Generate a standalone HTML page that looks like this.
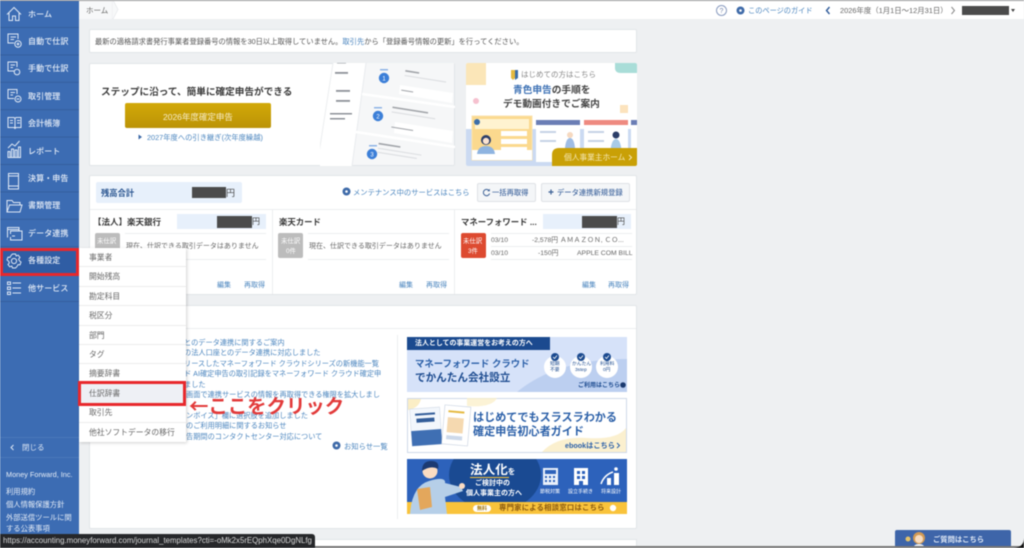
<!DOCTYPE html>
<html lang="ja"><head><meta charset="utf-8"><title>ホーム</title>
<style>
*{box-sizing:border-box}
html,body{margin:0;padding:0;width:1024px;height:548px;overflow:hidden;background:#eef0f2}
body{font-family:"Liberation Sans","Noto Sans CJK JP",sans-serif;position:relative}
#r{position:absolute;left:0;top:0;width:1024px;height:548px;overflow:hidden;filter:blur(.45px)}
#r div,#r svg,#r span.t{position:absolute}
.t{white-space:nowrap;height:12px;line-height:12px;font-size:7.5px;color:#555;margin-top:.7px}
.s{color:#e6edf7;font-size:8px;left:28px;font-weight:500;letter-spacing:.1px}
.l{color:#4c86bf}
.card{background:#fff;border:1px solid #e2e5e8;border-radius:2px}
.m{left:79px;width:107px;height:19.4px;background:#fff;border-bottom:1px solid #ececec;font-size:7.8px;color:#666;line-height:19.5px;padding-left:10px;white-space:nowrap}
.rd{background:#4b4b4b}
.hr{background:#eceef0;height:1px}
.bl{background:#e7f0fb}
.si{fill:none;stroke:#dfe8f5;stroke-width:1;left:0;top:0}
.b{font-weight:700;color:#333}
.nw{font-size:7.2px;color:#4c86bf}
</style></head><body><div id="r">

<!-- top bar -->
<div style="left:79px;top:0;width:945px;height:19px;background:#fff"></div>
<div style="left:79px;top:0;width:34px;height:19px;background:#f7f8f9"></div>
<svg style="left:112px;top:0" width="8" height="19"><path d="M0 0H1L6 9.5L1 19H0Z" fill="#f7f8f9" stroke="#e3e5e8" stroke-width=".6"/></svg>
<span class="t" style="left:86px;top:4px;color:#666">ホーム</span>
<svg style="left:715px;top:4px" width="13" height="13"><circle cx="6.5" cy="6.5" r="5" fill="none" stroke="#8a9cc0" stroke-width="1"/><text x="6.5" y="9" font-size="7" text-anchor="middle" fill="#7688ad" font-family="Liberation Sans">?</text></svg>
<svg style="left:736px;top:6px" width="9" height="9"><circle cx="4.5" cy="4.5" r="4" fill="#3e6aa8"/><circle cx="4.5" cy="4.5" r="1.3" fill="#fff"/></svg>
<span class="t" style="left:748px;top:4px;font-size:7.2px;color:#4c86bf">このページのガイド</span>
<svg style="left:825px;top:6px" width="6" height="9"><path d="M4.5 1L1.5 4.5L4.5 8" fill="none" stroke="#2f5b9a" stroke-width="1.4"/></svg>
<span class="t" style="left:840px;top:4px;font-size:7.4px;color:#666">2026年度（1月1日〜12月31日）</span>
<svg style="left:950px;top:6px" width="6" height="9"><path d="M1.5 1L4.5 4.5L1.5 8" fill="none" stroke="#888" stroke-width="1"/></svg>
<div class="rd" style="left:962px;top:6px;width:47px;height:9px"></div>
<svg style="left:1010px;top:8px" width="6" height="5"><path d="M1 1H5L3 4Z" fill="#444"/></svg>

<!-- notice -->
<div class="card" style="left:89px;top:29px;width:548px;height:24px"></div>
<span class="t" style="left:95px;top:35px;font-size:7.28px;color:#555">最新の適格請求書発行事業者登録番号の情報を30日以上取得していません。<span style="color:#4c86bf">取引先</span>から「登録番号情報の更新」を行ってください。</span>

<!-- hero -->
<div class="card" style="left:89px;top:63px;width:366px;height:103px"></div>
<span class="t b" style="left:101px;top:86px;font-size:9.65px;color:#3a3a3a">ステップに沿って、簡単に確定申告ができる</span>
<div style="left:125px;top:103px;width:146px;height:25px;border-radius:2px;background:linear-gradient(#d2a908,#bb9307)"></div>
<span class="t" style="left:163px;top:110px;font-size:8.5px;color:#f7ecc6">2026年度確定申告</span>
<svg style="left:138px;top:134px" width="5" height="6"><path d="M.5 .5L4 3L.5 5.5Z" fill="#3e6aa8"/></svg>
<span class="t l" style="left:147px;top:131px;font-size:7.3px">2027年度への引き継ぎ(次年度繰越)</span>
<svg style="left:320px;top:63px" width="135" height="103" viewBox="0 0 135 103">
<path d="M13 0L-3 103H32L46 0Z" fill="#fff"/>
<path d="M46 0H134V102H32Z" fill="#f6f7f8"/>
<path d="M13 0L-3 103" stroke="#eceef0" fill="none"/>
<path d="M46 0L32 103" stroke="#e9ebee" fill="none"/>
<path d="M42 31L135 44M36 69L135 84" stroke="#fff" stroke-width="2.5" fill="none"/>
<path d="M80 22L133 30L132 40L79 31Z" fill="#fff"/>
<path d="M75 59L133 68L132 80L74 70Z" fill="#fff"/>
<g fill="#8e9299"><rect x="15" y="9" width="13" height="1.8"/><rect x="16" y="27" width="14" height="1.8"/><rect x="16" y="37" width="14" height="1.8"/><rect x="10" y="50" width="22" height="1.5"/><rect x="10" y="55" width="15" height="1.5"/><rect x="17" y="-1" width="9" height="1.5"/></g>
<g fill="#a0a3a8" transform="rotate(9 85 10)"><rect x="85" y="7" width="14" height="1.6"/><rect x="78" y="45" width="36" height="1.6"/><rect x="70" y="83" width="22" height="1.6"/><rect x="84" y="27" width="12" height="1"/><rect x="80" y="65" width="22" height="1"/></g>
<g fill="#dcdee1" transform="rotate(9 85 10)"><rect x="85" y="12" width="42" height="1.1"/><rect x="78" y="50" width="44" height="1.1"/><rect x="70" y="88" width="44" height="1.1"/><rect x="70" y="92" width="40" height="1.1"/></g>
<circle cx="64" cy="15" r="5.2" fill="#3c7fd8"/><circle cx="58" cy="53" r="5.2" fill="#3c7fd8"/><circle cx="52" cy="91" r="5.2" fill="#3c7fd8"/>
<g fill="#8fb4e6"><rect x="60" y="6" width="8" height="1.5"/><rect x="54" y="44" width="8" height="1.5"/><rect x="49" y="82" width="8" height="1.5"/></g>
<text x="64" y="17.5" font-size="6" fill="#fff" text-anchor="middle" font-family="Liberation Sans">1</text>
<text x="58" y="55.5" font-size="6" fill="#fff" text-anchor="middle" font-family="Liberation Sans">2</text>
<text x="52" y="93.5" font-size="6" fill="#fff" text-anchor="middle" font-family="Liberation Sans">3</text>
</svg>

<!-- right promo -->
<svg style="left:466px;top:63px;border-radius:2px" width="171" height="103" viewBox="0 0 171 103">
<rect width="171" height="103" fill="#fff"/>
<path d="M0 0H20V22H0Z" fill="#fbe6b8"/>
<path d="M149 0H171V10H155Q149 10 149 5Z" fill="#a9ddd8"/>
<circle cx="10" cy="38" r="3" fill="#f6c1cf"/>
<rect x="154" y="42" width="8" height="8" fill="#fce3bd"/>
<path d="M45 7H49V15L47 17L45 15Z" fill="#e5b93f"/><path d="M49 7H52V15L49 17Z" fill="#3d6ea8"/>
<rect y="66" width="171" height="37" fill="#cbdaf2"/>
<rect x="6" y="53" width="60" height="44" fill="#fbd98e" stroke="#fbe3ae"/>
<rect x="6" y="87" width="60" height="10" fill="#fff"/>
<rect x="9" y="56" width="54" height="10" fill="#fff3d0"/>
<circle cx="11" cy="59" r="3" fill="#3d6ea8"/>
<g fill="#fff"><rect x="35" y="68" width="26" height="5"/><rect x="35" y="76" width="26" height="5"/><rect x="35" y="84" width="26" height="3"/></g>
<circle cx="20" cy="77" r="5" fill="#2c3e68"/><path d="M11 91Q12 83 20 83T29 91Z" fill="#8fb4e0"/>
<circle cx="20" cy="78" r="3.2" fill="#fbe3d0"/>
<rect x="70" y="57" width="44" height="42" fill="#fff"/><rect x="70" y="57" width="44" height="5" fill="#6b7eb5"/>
<rect x="118" y="57" width="44" height="42" fill="#fff"/><rect x="118" y="57" width="44" height="5" fill="#ee8a80"/>
<rect x="165" y="57" width="6" height="42" fill="#fff"/><rect x="165" y="57" width="6" height="5" fill="#6b7eb5"/>
<circle cx="104" cy="72" r="3" fill="#f6d9c0"/><path d="M99 85Q100 75 104 75T109 85Z" fill="#9fbde5"/><rect x="103" y="85" width="6" height="10" fill="#2c3e68"/>
<circle cx="150" cy="72" r="3.5" fill="#2c3e68"/><path d="M144 92Q145 76 150 76T156 92Z" fill="#a8cbe8"/>
<g fill="#c6d2e6"><rect x="74" y="68" width="16" height="2"/><rect x="74" y="77" width="16" height="2"/><rect x="122" y="68" width="16" height="2"/><rect x="122" y="77" width="16" height="2"/></g>
<path d="M86 103V92Q86 85 93 85H171V103Z" fill="#c9a006"/>
</svg>
<span class="t" style="left:521px;top:68px;font-size:7.5px;color:#888">はじめての方はこちら</span>
<span class="t" style="left:513px;top:84px;font-size:9.7px;font-weight:700;color:#444"><span style="color:#3e72b5">青色申告</span>の手順を</span>
<span class="t" style="left:503px;top:98px;font-size:9.7px;font-weight:700;color:#444">デモ動画付きでご案内</span>
<span class="t" style="left:564px;top:151px;font-size:7.7px;color:#f5e7b5">個人事業主ホーム</span>
<svg style="left:628px;top:154px" width="5" height="7"><path d="M1 1L3.5 3.5L1 6" fill="none" stroke="#f5e7b5"/></svg>

<!-- balance card -->
<div class="card" style="left:89px;top:175px;width:548px;height:120px"></div>
<div class="bl" style="left:96px;top:182px;width:146px;height:21px;border-radius:2px"></div>
<span class="t" style="left:101px;top:186px;font-size:8.3px;font-weight:700;color:#2a5590">残高合計</span>
<div class="rd" style="left:192px;top:187px;width:34px;height:11px"></div>
<span class="t" style="left:226px;top:186px;font-size:9px;color:#444">円</span>
<svg style="left:342px;top:187px" width="9" height="9"><circle cx="4.5" cy="4.5" r="4" fill="#3e6aa8"/><circle cx="4.5" cy="4.5" r="1.3" fill="#fff"/></svg>
<span class="t l" style="left:353px;top:186px;font-size:7.3px">メンテナンス中のサービスはこちら</span>
<div style="left:477px;top:183px;width:59px;height:19px;background:#f4f6f8;border:1px solid #dfe2e6;border-radius:2px"></div>
<svg style="left:482px;top:188px" width="9" height="9"><path d="M7 2.5A3.2 3.2 0 1 0 7.6 5.5" fill="none" stroke="#3a5f95" stroke-width="1"/><path d="M7.8 .8V3.3H5.3" fill="#3a5f95"/></svg>
<span class="t" style="left:492px;top:186px;font-size:7.3px;color:#4a6ea3;font-weight:500">一括再取得</span>
<div style="left:541px;top:183px;width:89px;height:19px;background:#f4f6f8;border:1px solid #dfe2e6;border-radius:2px"></div>
<svg style="left:548px;top:189px" width="6" height="6"><path d="M3 .5V5.5M.5 3H5.5" stroke="#3a5f95" stroke-width="1.2"/></svg>
<span class="t" style="left:557px;top:186px;font-size:7.3px;color:#4a6ea3;font-weight:500">データ連携新規登録</span>
<div class="hr" style="left:90px;top:209px;width:546px"></div>
<div style="left:272px;top:210px;width:1px;height:84px;background:#eceef0"></div>
<div style="left:454px;top:210px;width:1px;height:84px;background:#eceef0"></div>

<span class="t b" style="left:93px;top:215px;font-size:8.5px;color:#3a3a3a">【法人】楽天銀行</span>
<div class="bl" style="left:177px;top:214px;width:89px;height:15px"></div>
<div class="rd" style="left:217px;top:216px;width:35px;height:12px"></div>
<span class="t" style="left:252px;top:215px;font-size:8px;color:#444">円</span>
<div class="hr" style="left:125px;top:233px;width:141px"></div><div class="hr" style="left:125px;top:259px;width:141px"></div>
<div style="left:95px;top:233px;width:25px;height:25px;background:#bcbcbc;border-radius:2px"></div>
<span class="t" style="left:97px;top:235px;font-size:6.4px;color:#fff">未仕訳</span>
<span class="t" style="left:126px;top:240px;font-size:7px;color:#666">現在、仕訳できる取引データはありません</span>
<span class="t l" style="left:217px;top:279px;font-size:7px">編集</span>
<span class="t l" style="left:244px;top:279px;font-size:7px">再取得</span>

<span class="t b" style="left:279px;top:215px;font-size:8.4px;color:#3a3a3a">楽天カード</span>
<div class="hr" style="left:308px;top:233px;width:141px"></div><div class="hr" style="left:308px;top:259px;width:141px"></div>
<div style="left:278px;top:233px;width:25px;height:25px;background:#bcbcbc;border-radius:2px"></div>
<span class="t" style="left:281px;top:235px;font-size:6.4px;color:#fff">未仕訳</span>
<span class="t" style="left:286px;top:245px;font-size:6.4px;color:#fff">0件</span>
<span class="t" style="left:309px;top:240px;font-size:7px;color:#666">現在、仕訳できる取引データはありません</span>
<span class="t l" style="left:399px;top:279px;font-size:7px">編集</span>
<span class="t l" style="left:426px;top:279px;font-size:7px">再取得</span>

<span class="t b" style="left:461px;top:215px;font-size:8.4px;color:#3a3a3a">マネーフォワード ...</span>
<div class="bl" style="left:543px;top:214px;width:88px;height:15px"></div>
<div class="rd" style="left:582px;top:216px;width:35px;height:12px"></div>
<span class="t" style="left:617px;top:215px;font-size:8px;color:#444">円</span>
<div style="left:461px;top:233px;width:25px;height:25px;background:#dd4a30;border-radius:2px"></div>
<span class="t" style="left:463px;top:235px;font-size:6.4px;color:#fff">未仕訳</span>
<span class="t" style="left:468px;top:245px;font-size:6.4px;color:#fff">3件</span>
<div class="hr" style="left:491px;top:233px;width:141px"></div><div class="hr" style="left:491px;top:246px;width:141px"></div><div class="hr" style="left:491px;top:259px;width:141px"></div>
<span class="t" style="left:491px;top:234px;font-size:6.8px;color:#666">03/10</span>
<span class="t" style="left:532px;top:234px;font-size:6.8px;color:#666">-2,578円</span>
<span class="t" style="left:560px;top:234px;font-size:6.8px;color:#666">ＡＭＡＺＯＮ, ＣＯ...</span>
<span class="t" style="left:491px;top:247px;font-size:6.8px;color:#666">03/10</span>
<span class="t" style="left:538px;top:247px;font-size:6.8px;color:#666">-150円</span>
<span class="t" style="left:577px;top:247px;font-size:6.8px;color:#666">APPLE COM BILL</span>
<span class="t l" style="left:582px;top:279px;font-size:7px">編集</span>
<span class="t l" style="left:608px;top:279px;font-size:7px">再取得</span>

<!-- news card -->
<div class="card" style="left:89px;top:305px;width:548px;height:224px"></div>
<div class="hr" style="left:90px;top:328px;width:546px"></div>
<div style="left:397px;top:335px;width:1px;height:184px;background:#eceef0"></div>
<span class="t nw" style="left:184px;top:336px">とのデータ連携に関するご案内</span>
<span class="t nw" style="left:184px;top:346px">の法人口座とのデータ連携に対応しました</span>
<span class="t nw" style="left:184px;top:357px">リースしたマネーフォワード クラウドシリーズの新機能一覧</span>
<span class="t nw" style="left:184px;top:367px">ド AI確定申告の取引記録をマネーフォワード クラウド確定申</span>
<span class="t nw" style="left:184px;top:378px">ました</span>
<span class="t nw" style="left:186px;top:388px">画面で連携サービスの情報を再取得できる権限を拡大しまし</span>
<span class="t nw" style="left:186px;top:409px">ンボイス」欄に選択肢を追加しました</span>
<span class="t nw" style="left:186px;top:419px">のご利用明細に関するお知らせ</span>
<span class="t nw" style="left:186px;top:430px">告期間のコンタクトセンター対応について</span>
<svg style="left:332px;top:441px" width="9" height="9"><circle cx="4.5" cy="4.5" r="4" fill="#3e6aa8"/><circle cx="4.5" cy="4.5" r="1.3" fill="#fff"/></svg>
<span class="t l" style="left:344px;top:440px;font-size:7.3px">お知らせ一覧</span>

<!-- banners -->
<svg style="left:407px;top:337px" width="220" height="55" viewBox="0 0 220 55">
<rect width="220" height="55" fill="#d6e2f9"/>
<path d="M110 55Q150 22 220 22V55Z" fill="#bccff0"/>
<rect width="143" height="13" fill="#1b4a8f"/>
<circle cx="148" cy="30" r="11" fill="#fff"/><circle cx="174" cy="30" r="11" fill="#fff"/><circle cx="200" cy="30" r="11" fill="#fff"/>
<circle cx="148" cy="20" r="4" fill="#1b4a8f"/><circle cx="174" cy="20" r="4" fill="#1b4a8f"/><circle cx="200" cy="20" r="4" fill="#1b4a8f"/>
<path d="M146 20L147.5 21.5L150 18.5M172 20L173.5 21.5L176 18.5M198 20L199.5 21.5L202 18.5" fill="none" stroke="#fff" stroke-width=".8"/>
<circle cx="216" cy="48" r="2.8" fill="#1b3a70"/>
</svg>
<span class="t" style="left:415px;top:337px;font-size:6.95px;font-weight:700;color:#fff">法人としての事業運営をお考えの方へ</span>
<span class="t" style="left:415px;top:357px;font-size:9.4px;font-weight:700;color:#2a5fa8">マネーフォワード クラウド</span>
<span class="t" style="left:415px;top:371px;font-size:10.6px;font-weight:700;color:#1b4a8f">でかんたん会社設立</span>
<span class="t" style="left:550px;top:358px;font-size:4.8px;color:#1b4a8f">短期</span>
<span class="t" style="left:550px;top:364px;font-size:4.8px;color:#1b4a8f">不要</span>
<span class="t" style="left:572px;top:358px;font-size:4.8px;color:#1b4a8f">かんたん</span>
<span class="t" style="left:575px;top:364px;font-size:4.8px;color:#1b4a8f">3step</span>
<span class="t" style="left:600px;top:358px;font-size:4.8px;color:#1b4a8f">利用料</span>
<span class="t" style="left:603px;top:364px;font-size:4.8px;color:#1b4a8f">0円</span>
<span class="t" style="left:578px;top:379px;font-size:6px;font-weight:700;color:#1b4a8f">ご利用はこちら</span>

<svg style="left:407px;top:398px" width="220" height="55" viewBox="0 0 220 55">
<rect x=".5" y=".5" width="219" height="54" fill="#fff" stroke="#cfd9e8"/>
<path d="M1 1H14Q12 10 1 12Z" fill="#fbeec5"/>
<path d="M135 54Q150 38 180 40T219 30V54Z" fill="#fbf0cf"/>
<path d="M60 0H90Q85 10 60 8Z" fill="#fbeec5" opacity=".7"/>
<g transform="rotate(-4 20 30)"><rect x="4" y="10" width="30" height="37" fill="#f3f7fc" stroke="#cdd6e4" stroke-width=".5"/><rect x="4" y="32" width="30" height="15" fill="#3f6fb3"/><rect x="9" y="15" width="20" height="2" fill="#335d99"/><rect x="10" y="20" width="18" height="4" fill="#335d99"/></g>
<g transform="rotate(5 50 30)"><rect x="36" y="8" width="26" height="39" fill="#fff" stroke="#bcc8da" stroke-width=".5"/><rect x="40" y="13" width="16" height="2" fill="#e5b93f"/><rect x="40" y="20" width="16" height="15" fill="#f5d9b0"/><rect x="40" y="38" width="16" height="4" fill="#cdd9ea"/></g>
</svg>
<span class="t" style="left:473px;top:411px;font-size:11.1px;font-weight:700;color:#2a5fa8">はじめてでもスラスラわかる</span>
<span class="t" style="left:473px;top:425px;font-size:11.1px;font-weight:700;color:#2a5fa8">確定申告初心者ガイド</span>
<span class="t" style="left:565px;top:439px;font-size:7.2px;font-weight:700;color:#2a5fa8">ebookはこちら</span>
<svg style="left:616px;top:442px" width="5" height="7"><path d="M1 1L3.5 3.5L1 6" fill="none" stroke="#2a5fa8"/></svg>

<svg style="left:407px;top:459px" width="220" height="55" viewBox="0 0 220 55">
<rect width="220" height="55" fill="#2d62bb"/>
<ellipse cx="88" cy="16" rx="46" ry="36" fill="#1a4a92"/>
<rect y="43" width="220" height="12" fill="#f9c33b"/>
<path d="M3 55Q5 27 22 22T38 24L54 28L56 32L38 38L40 55Z" fill="#b6cfe8"/>
<circle cx="23" cy="12" r="7.5" fill="#fbdcc2"/><path d="M15 12Q15 2 24 2T31 10Q24 6 15 12Z" fill="#1c3a72"/>
<path d="M10 30L23 28L25 48L13 51Z" fill="#e3a75c"/>
<circle cx="55" cy="27" r="3" fill="#fbdcc2"/>
<rect x="136" y="9" width="15" height="17" fill="#e9f0fa"/>
<rect x="138" y="11" width="11" height="4" fill="#2d62bb"/>
<g fill="#2d62bb"><rect x="138" y="17" width="2" height="2"/><rect x="142" y="17" width="2" height="2"/><rect x="146" y="17" width="2" height="2"/><rect x="138" y="21" width="2" height="2"/><rect x="142" y="21" width="2" height="2"/><rect x="146" y="21" width="2" height="2"/></g>
<rect x="167" y="9" width="14" height="17" fill="#fff"/>
<g fill="#2d62bb"><rect x="170" y="12" width="3" height="3"/><rect x="175" y="12" width="3" height="3"/><rect x="170" y="17" width="3" height="3"/><rect x="175" y="17" width="3" height="3"/><rect x="172" y="22" width="4" height="4"/></g>
<path d="M194 25Q197 16 206 13" fill="none" stroke="#fff" stroke-width="1.5"/>
<rect x="200" y="19" width="4" height="7" fill="#fff"/><rect x="207" y="14" width="5" height="12" fill="#fff"/><circle cx="209" cy="10" r="1.8" fill="#fff"/>
<rect x="66" y="46" width="18" height="7" rx="3.5" fill="#fff"/>
<circle cx="206" cy="49" r="3.2" fill="#fff"/>
</svg>
<span class="t" style="left:470px;top:463px;font-size:12.6px;font-weight:700;color:#fff">法人化<span style="font-size:7.5px">を</span></span>
<div style="left:470px;top:477px;width:39px;height:1px;background:#f9c33b"></div>
<span class="t" style="left:475px;top:477px;font-size:7px;font-weight:700;color:#fff">ご検討中の</span>
<span class="t" style="left:466px;top:487px;font-size:7px;font-weight:700;color:#fff">個人事業主の方へ</span>
<span class="t" style="left:540px;top:485px;font-size:5px;color:#fff">節税対策</span>
<span class="t" style="left:568px;top:485px;font-size:5px;color:#fff">設立手続き</span>
<span class="t" style="left:601px;top:485px;font-size:5px;color:#fff">将来設計</span>
<span class="t" style="left:477px;top:502px;font-size:5px;font-weight:700;color:#a87a10">無料</span>
<span class="t" style="left:499px;top:501.5px;font-size:7.3px;font-weight:700;color:#8a5a10;letter-spacing:.27px">専門家による相談窓口はこちら</span>

<div style="left:89px;top:539px;width:548px;height:9px;background:#fff;border:1px solid #e2e5e8"></div>

<!-- sidebar -->
<div style="left:0;top:0;width:79px;height:548px;background:#3c6cb3"></div>
<div style="left:0;top:0;width:1024px;height:1px;background:#9a9a9a"></div>
<div class="hr" style="left:0;top:27px;width:79px;background:#355f9f;box-shadow:0 27.4px #355f9f,0 54.8px #355f9f,0 82.2px #355f9f,0 109.6px #355f9f,0 137px #355f9f,0 164.4px #355f9f,0 191.8px #355f9f,0 219.2px #355f9f,0 246.6px #355f9f,0 274px #355f9f"></div>
<div style="left:0;top:248px;width:79px;height:28px;background:#2f5da4;border:3px solid #e8282c"></div>
<span class="t s" style="top:8px">ホーム</span>
<span class="t s" style="top:35px">自動で仕訳</span>
<span class="t s" style="top:62px">手動で仕訳</span>
<span class="t s" style="top:90px">取引管理</span>
<span class="t s" style="top:117px">会計帳簿</span>
<span class="t s" style="top:145px">レポート</span>
<span class="t s" style="top:172px">決算・申告</span>
<span class="t s" style="top:199px">書類管理</span>
<span class="t s" style="top:227px">データ連携</span>
<span class="t s" style="top:254px">各種設定</span>
<span class="t s" style="top:282px">他サービス</span>
<svg class="si" width="24" height="300" viewBox="0 0 24 300">
<path d="M7 14.5L14 7.5L21 14.5M9 13V20.5H12.5V16H15.5V20.5H19V13"/>
<path d="M14 43H8V34H18V39M10.5 37H16M10.5 39.5H14"/><circle cx="18" cy="44" r="3.2"/><path d="M18 42.5V45.5M16.5 44H19.5"/>
<path d="M14 71H8V62H17V67M10.5 65H15M10.5 67.5H13"/><circle cx="17" cy="72" r="2.8"/>
<path d="M14 98.5H8V89.5H17V94M10.5 92.5H15M10.5 95H13"/><circle cx="18" cy="99" r="3"/><path d="M16.5 99H19.5"/>
<path d="M8 117.5V127.5H14L15 128.5L16 127.5H21V117.5H16L15 118.5L14 117.5ZM15 118.5V128M10 120.5H13M10 123H13M17 120.5H20M17 123H20"/>
<path d="M8 157V151.5H10V157M11.5 157V149H13.5V157M15 157V150H17V157M18.5 157V147H20.5V157M7.5 157.5H21M8 148L12 144L15 146L19.5 141"/>
<path d="M8.5 173.5H18.5V189H8.5ZM8.5 176H18.5M8.5 186H18.5"/>
<path d="M7 212V200.5H12L13.5 202.5H20V205M7 212L9.5 205H22L20 212Z"/>
<path d="M7.5 237.5V227.5H19V230.5M10.5 234V231H22V240H10.5V237"/><path d="M12 236H15M7.5 229.5H19"/>
<circle cx="14" cy="261" r="2.6"/><path d="M12.5 254L15.5 254L16.2 256L18.2 255.2L20 257.5L18.6 259.2L19.6 261L21 262L20 264.8L18 264.6L17 266.5L15.5 268H12.5L11.8 266L9.8 266.8L8 264.5L9.4 262.8L8.4 261L7 260L8 257.2L10 257.4L11 255.5Z"/>
<rect x="7.5" y="282" width="3" height="2.5"/><rect x="7.5" y="287" width="3" height="2.5"/><rect x="7.5" y="292" width="3" height="2.5"/><path d="M12.5 283H21M12.5 288H21M12.5 293H21"/>
</svg>
<div style="left:0;top:437px;width:79px;height:1px;background:#4a78ba"></div>
<div style="left:0;top:457px;width:79px;height:1px;background:#4a78ba"></div>
<svg style="left:10px;top:444px" width="5" height="7"><path d="M3.5 1L1 3.5L3.5 6" fill="none" stroke="#dfe8f5"/></svg>
<span class="t" style="left:22px;top:441px;font-size:7.5px;color:#dfe8f5">閉じる</span>
<span class="t" style="left:6px;top:468px;font-size:7.3px;color:#e6edf7">Money Forward, Inc.</span>
<span class="t" style="left:6px;top:485px;font-size:7.3px;color:#e6edf7">利用規約</span>
<span class="t" style="left:6px;top:498px;font-size:7.3px;color:#e6edf7">個人情報保護方針</span>
<span class="t" style="left:6px;top:511px;font-size:7.3px;color:#e6edf7">外部送信ツールに関</span>
<span class="t" style="left:6px;top:522px;font-size:7.3px;color:#e6edf7">する公表事項</span>

<!-- menu -->
<div style="left:79px;top:248px;width:107px;height:194px;background:#fff;box-shadow:1px 1px 3px rgba(0,0,0,.18)"></div>
<div class="m" style="top:248px">事業者</div>
<div class="m" style="top:267.4px">開始残高</div>
<div class="m" style="top:286.8px">勘定科目</div>
<div class="m" style="top:306.2px">税区分</div>
<div class="m" style="top:325.6px">部門</div>
<div class="m" style="top:345px">タグ</div>
<div class="m" style="top:364.4px">摘要辞書</div>
<div class="m" style="top:383.8px;background:#eef0f5">仕訳辞書</div>
<div class="m" style="top:403.2px">取引先</div>
<div class="m" style="top:422.6px;border-bottom:0">他社ソフトデータの移行</div>
<div style="left:78px;top:381px;width:108px;height:25px;border:3px solid #e8282c"></div>
<span class="t" style="left:189px;top:397px;height:14px;line-height:14px;font-size:19.4px;font-weight:700;color:#e23a3a;font-family:'Noto Sans CJK JP',sans-serif">←ここをクリック</span>

<!-- help button -->
<div style="left:895px;top:530px;width:116px;height:18px;background:#3e65a9;border-radius:2px 2px 0 0"></div>
<svg style="left:905px;top:531px" width="24" height="17"><circle cx="3" cy="8" r="2.5" fill="#e3c26a"/><circle cx="14" cy="7" r="6" fill="#d19a55"/><circle cx="14" cy="8" r="4" fill="#f7dcc0"/><path d="M8 17Q9 13 14 13T20 17Z" fill="#eaf0f7"/></svg>
<span class="t" style="left:933px;top:533px;font-size:7.3px;font-weight:700;color:#dfe8f5">ご質問はこちら</span>
<div style="left:315px;top:546px;width:709px;height:2px;background:#777"></div>
<svg style="left:1014px;top:538px" width="10" height="10"><path d="M10 0V10H0Q10 9 10 0Z" fill="#111"/></svg>

<!-- status bar -->
<div style="left:0;top:534px;width:315px;height:14px;background:#26272a;border-radius:0 3px 0 0"></div>
<span class="t" style="left:3px;top:534.5px;font-size:7.85px;color:#d8d8d8;font-family:'Liberation Sans',sans-serif">https://accounting.moneyforward.com/journal_templates?cti=-oMk2x5rEQphXqe0DgNLfg</span>

</div></body></html>
